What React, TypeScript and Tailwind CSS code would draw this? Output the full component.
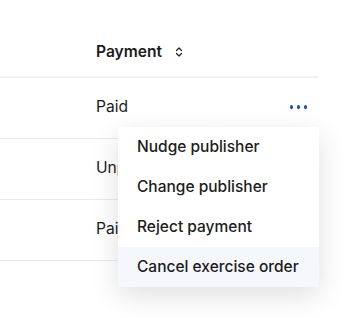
const rows = ["Paid", "Unpaid", "Paid"];
const actions = ["Nudge publisher", "Change publisher", "Reject payment", "Cancel exercise order"];

function SortIcon() {
  return (
    <svg width="8" height="12" viewBox="0 0 8 12" fill="none" className="ml-[13px]">
      <path d="M1.5 4.5 4 2l2.5 2.5M1.5 7.5 4 10l2.5-2.5" stroke="#222" strokeWidth="1.2" strokeLinecap="round" strokeLinejoin="round" />
    </svg>
  );
}

export default function App() {
  return (
    <div className="relative h-[318px] w-[350px] overflow-hidden bg-white text-[#1c1c1c] font-['Inter',sans-serif]">
      <div className="w-[318px]">
        <div className="flex h-[78px] items-end border-b-2 border-[#eef1f5] pb-[14px] pl-[96px]">
          <span className="flex items-center text-[15.6px] font-semibold leading-5">
            Payment
            <SortIcon />
          </span>
        </div>
        {rows.map((status, i) => (
          <div key={i} className="flex h-[61px] items-center justify-between border-b border-[#e6e9f0] pb-[2px] pl-[96px] pr-[11px]">
            <span className="text-[15.6px] leading-5">{status}</span>
            {i === 0 && (
              <button className="flex items-center gap-[3.5px]">
                <span className="h-[3.5px] w-[3.5px] rounded-full bg-[#1f4fc4]" />
                <span className="h-[3.5px] w-[3.5px] rounded-full bg-[#1f4fc4]" />
                <span className="h-[3.5px] w-[3.5px] rounded-full bg-[#1f4fc4]" />
              </button>
            )}
          </div>
        ))}
      </div>

      <div className="absolute left-[118px] top-[127px] w-[201px] rounded-[3px] bg-white shadow-[0_8px_28px_rgba(0,0,0,0.13)]">
        {actions.map((a, i) => (
          <div
            key={a}
            className={`flex h-10 items-center whitespace-nowrap pl-[19px] text-[15.5px] font-medium leading-5 ${i === actions.length - 1 ? "bg-[#f6f7fb]" : ""}`}
          >
            {a}
          </div>
        ))}
      </div>
    </div>
  );
}
